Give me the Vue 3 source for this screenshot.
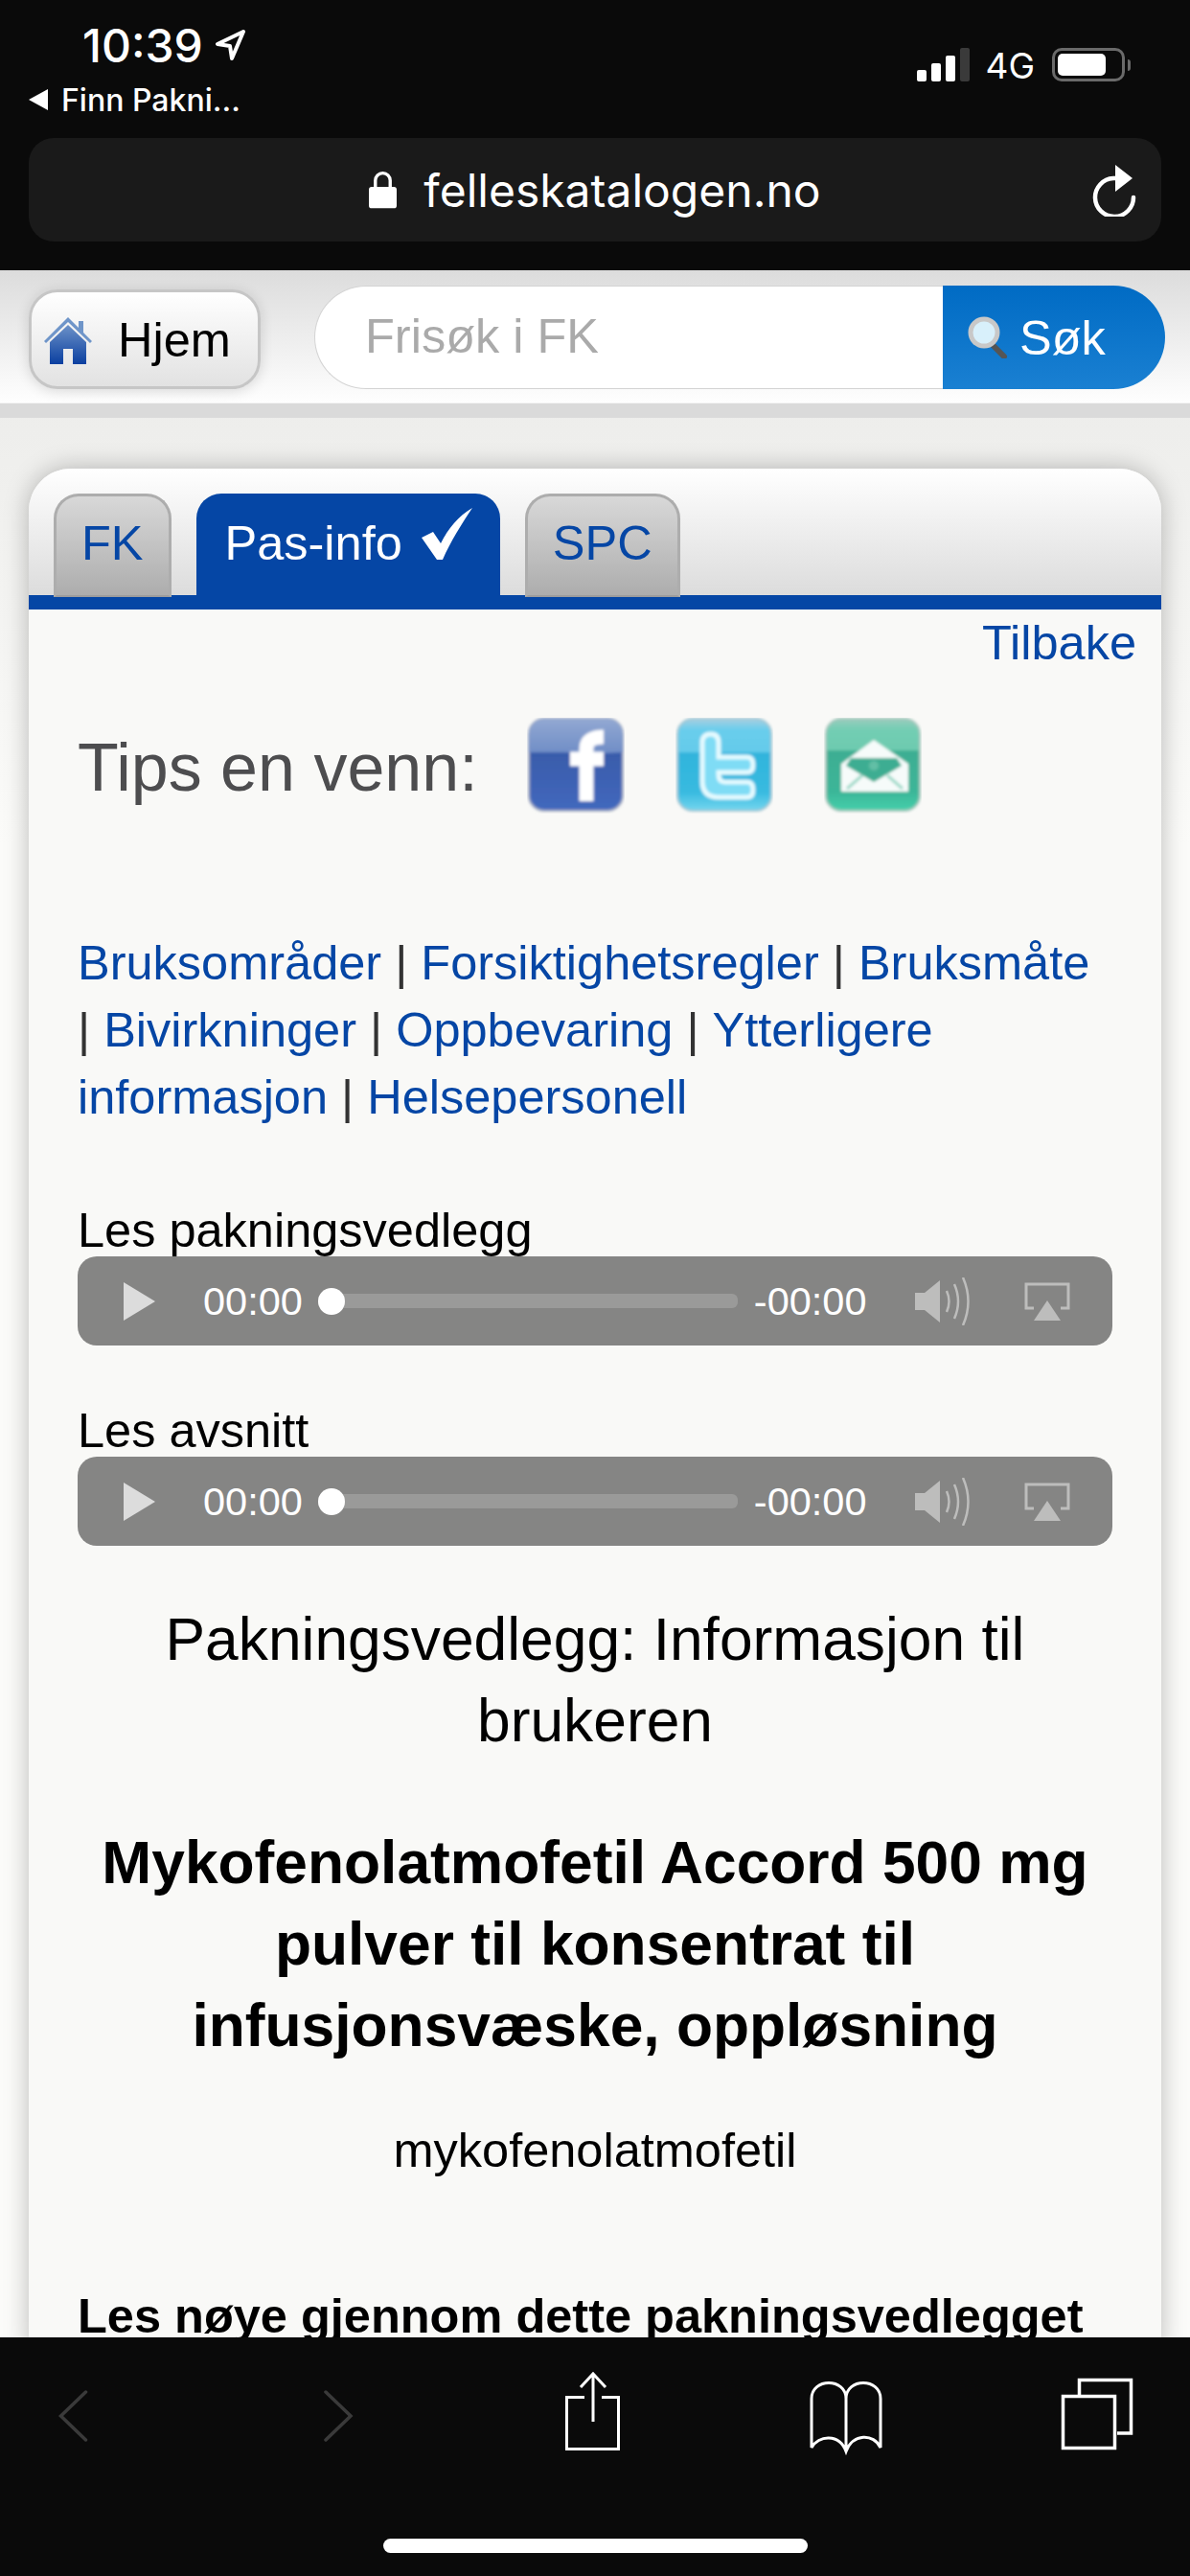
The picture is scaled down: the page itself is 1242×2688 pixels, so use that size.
<script setup>
const navLinks = [
  { text: 'Bruksområder', sep: true },
  { text: 'Forsiktighetsregler', sep: true },
  { text: 'Bruksmåte', sep: true },
  { text: 'Bivirkninger', sep: true },
  { text: 'Oppbevaring', sep: true },
  { text: 'Ytterligere', sep: false },
  { text: 'informasjon', sep: true },
  { text: 'Helsepersonell', sep: false },
]
const players = ['Les pakningsvedlegg', 'Les avsnitt']
</script>

<template>
  <div class="phone">
    <header class="chrome">
      <div class="status">
        <div class="status-left">
          <div class="time">
            10:39
            <svg class="loc" viewBox="0 0 32 32"><path d="M30 2 3 15l13 2 2 13z" fill="none" stroke="#fff" stroke-width="4" stroke-linejoin="round"/></svg>
          </div>
          <div class="back-app">
            <span class="back-tri"></span>
            Finn Pakni...
          </div>
        </div>
        <div class="status-right">
          <div class="signal">
            <i class="b1"></i><i class="b2"></i><i class="b3"></i><i class="b4"></i>
          </div>
          <span class="net">4G</span>
          <div class="battery"><span></span></div>
          <div class="battery-tip"></div>
        </div>
      </div>
      <div class="urlbar">
        <svg class="lock" viewBox="0 0 30 40"><path d="M7 19V10a8 8 0 0 1 16 0v9" fill="none" stroke="#fff" stroke-width="3.5"/><rect y="17" width="30" height="23" rx="3" fill="#fff"/></svg>
        <span class="url">felleskatalogen.no</span>
        <svg class="reload" viewBox="0 0 46 54"><path d="M27 14H22a20 20 0 1 0 21 20" fill="none" stroke="#fff" stroke-width="4.5" stroke-linecap="round"/><path d="M24 0l18 14-18 14z" fill="#fff"/></svg>
      </div>
    </header>

    <div class="page">
      <div class="topbar">
        <button class="home">
          <svg class="house" viewBox="0 0 52 52">
            <defs>
              <linearGradient id="houseFill" x1="0" y1="0" x2="0" y2="1">
                <stop offset="0" stop-color="#6d92c8"/>
                <stop offset="1" stop-color="#0a3fa0"/>
              </linearGradient>
            </defs>
            <path d="M26 3 1 28l2 2L26 8l23 22 2-2-9-9V7h-5v7z" fill="#6f95c9"/>
            <path d="M26 11 7 29v23h14V36h10v16h14V29z" fill="url(#houseFill)"/>
          </svg>
          Hjem
        </button>
        <div class="search">
          <span class="search-input">Frisøk i FK</span>
          <div class="search-btn">
            <svg class="glass" viewBox="0 0 44 44">
              <path d="M27 31l11 11" stroke="#555" stroke-width="6" stroke-linecap="round"/>
              <circle cx="17" cy="17" r="14" fill="#d8f0fb" stroke="#c8c8c8" stroke-width="5"/>
            </svg>
            Søk
          </div>
        </div>
      </div>
      <div class="strip"></div>

      <main class="content">
        <section class="card">
          <div class="tabs">
            <a class="tab">FK</a>
            <a class="tab active">
              Pas-info
              <svg class="check" viewBox="0 0 56 56"><path d="M2 32l12-6 8 12C30 22 40 10 55 1 45 16 32 36 24 55h-6z" fill="#fff"/></svg>
            </a>
            <a class="tab">SPC</a>
          </div>

          <div class="card-body">
            <div class="back-row"><a class="link">Tilbake</a></div>

            <div class="tips">
              <span class="tips-label">Tips en venn:</span>
              <div class="social">
                <svg viewBox="0 0 102 100" class="soc">
                  <defs>
                    <linearGradient id="fbTop" x1="0" y1="0" x2="0" y2="1"><stop offset="0" stop-color="#92a8d2"/><stop offset="1" stop-color="#6e8cc6"/></linearGradient>
                    <linearGradient id="fbBot" x1="0" y1="0" x2="0" y2="1"><stop offset="0" stop-color="#33549f"/><stop offset="1" stop-color="#4268bd"/></linearGradient>
                    <filter id="soft"><feGaussianBlur stdDeviation="1.4"/></filter>
                  </defs>
                  <g filter="url(#soft)">
                    <rect x="2" y="1" width="98" height="96" rx="16" fill="url(#fbBot)" stroke="#a8b0c4" stroke-width="2"/>
                    <path d="M2 36V17A16 16 0 0 1 18 1h66a16 16 0 0 1 16 16v19L60 38l-20-2z" fill="url(#fbTop)"/>
                    <path d="M62 87V32q0-12 18-12M45 43h35" fill="none" stroke="#fff" stroke-width="15"/>
                  </g>
                </svg>
                <svg viewBox="0 0 102 100" class="soc">
                  <defs>
                    <linearGradient id="twBody" x1="0" y1="0" x2="0" y2="1"><stop offset="0" stop-color="#a8cfe0"/><stop offset=".12" stop-color="#68cdec"/><stop offset=".36" stop-color="#64cbea"/><stop offset=".37" stop-color="#2fb4dc"/><stop offset=".8" stop-color="#38bae0"/><stop offset="1" stop-color="#75d6ee"/></linearGradient>
                  </defs>
                  <g filter="url(#soft)">
                    <rect x="2" y="1" width="98" height="96" rx="16" fill="url(#twBody)" stroke="#a6c8d4" stroke-width="2"/>
                    <path d="M28 24v42q0 17 17 17h30q6 0 6-8t-6-8H52q-7 0-7-8V57h30q6 0 6-8t-6-8H45V26q0-9-8-9t-9 7z" fill="#7fdcf5" stroke="#e6fbff" stroke-width="5"/>
                  </g>
                </svg>
                <svg viewBox="0 0 102 100" class="soc">
                  <defs>
                    <linearGradient id="mlBody" x1="0" y1="0" x2="0" y2="1"><stop offset="0" stop-color="#9accbd"/><stop offset=".12" stop-color="#72cdb3"/><stop offset=".34" stop-color="#6dcbaf"/><stop offset=".35" stop-color="#3dad92"/><stop offset=".8" stop-color="#3bb698"/><stop offset="1" stop-color="#46d0ab"/></linearGradient>
                  </defs>
                  <g filter="url(#soft)">
                    <rect x="2" y="1" width="98" height="96" rx="16" fill="url(#mlBody)" stroke="#a8c8be" stroke-width="2"/>
                    <path d="M18 48 52 23l36 25v29H18z" fill="#f6fbfa"/>
                    <path d="M28 42h48l5 8-29 17-29-17z" fill="#3dad92"/>
                    <circle cx="52" cy="50" r="5" fill="#62bfa6"/>
                    <path d="M24 74l16-14M82 74 66 60" stroke="#9dd9c8" stroke-width="3"/>
                  </g>
                </svg>
              </div>
            </div>

            <p class="nav-links">
              <template v-for="l in navLinks" :key="l.text">
                <a class="link">{{ l.text }}</a>{{ ' ' }}<span v-if="l.sep">|&nbsp;</span>
              </template>
            </p>

            <div v-for="(p, i) in players" :key="p" class="audio-block" :class="{ first: i === 0 }">
              <div class="audio-label">{{ p }}</div>
              <div class="audio">
                <span class="play"></span>
                <span class="atime">00:00</span>
                <div class="track"><span class="thumb"></span></div>
                <span class="atime">-00:00</span>
                <svg class="speaker" viewBox="0 0 60 50">
                  <path d="M0 16h10L26 3v44L10 34H0z" fill="#bdbdbc"/>
                  <path d="M33 14q5 11 0 22M41 7q8 18 0 36M50 0q11 25 0 50" fill="none" stroke="#bdbdbc" stroke-width="2.5"/>
                </svg>
                <svg class="airplay" viewBox="0 0 48 40">
                  <path d="M10 27H2V2h44v25h-8" fill="none" stroke="#bdbdbc" stroke-width="3"/>
                  <path d="M24 19l14 21H10z" fill="#bdbdbc"/>
                </svg>
              </div>
            </div>

            <h2 class="doc-title">Pakningsvedlegg: Informasjon til brukeren</h2>
            <h1 class="doc-name">Mykofenolatmofetil Accord 500 mg pulver til konsentrat til infusjonsvæske, oppløsning</h1>
            <p class="doc-sub">mykofenolatmofetil</p>
            <p class="doc-lead">Les nøye gjennom dette pakningsvedlegget</p>
          </div>
        </section>
      </main>
    </div>

    <footer class="toolbar">
      <div class="tools">
        <svg class="tool" viewBox="0 0 74 84"><path d="M47.5 21 21.5 46l26 25" fill="none" stroke="#3a3a3a" stroke-width="3.5" stroke-linecap="round"/></svg>
        <svg class="tool" viewBox="0 0 74 84"><path d="M31 21 57 46 31 71" fill="none" stroke="#3a3a3a" stroke-width="3.5" stroke-linecap="round"/></svg>
        <svg class="tool" viewBox="0 0 74 84">
          <path d="M35 26.5H16.5v54h54v-54H53" fill="none" stroke="#fff" stroke-width="3"/>
          <path d="M44 52V3M31 16 44 2l13 14" fill="none" stroke="#fff" stroke-width="3"/>
        </svg>
        <svg class="tool" viewBox="0 0 74 84">
          <path d="M41 28C41 6 5 6 5 28V79C12 66 34 64 41 83 48 64 70 64 77 79V28C77 6 41 6 41 28V83" fill="none" stroke="#fff" stroke-width="3"/>
        </svg>
        <svg class="tool" viewBox="0 0 74 84">
          <rect x="1.5" y="25.5" width="54" height="54" fill="none" stroke="#fff" stroke-width="3.5"/>
          <path d="M18.5 25V8.5h54V64H58" fill="none" stroke="#fff" stroke-width="3.5"/>
        </svg>
      </div>
      <div class="home-indicator"></div>
    </footer>
  </div>
</template>

<style scoped>
.phone {
  width: 1242px;
  height: 2688px;
  display: flex;
  flex-direction: column;
  overflow: hidden;
  font-family: "Liberation Sans", Arial, sans-serif;
  background: #0a0a0a;
}

.chrome {
  height: 282px;
  flex: none;
  background: #0a0a0a;
  color: #fff;
  font-family: Inter, "Liberation Sans", sans-serif;
  padding: 20px 30px 0;
  box-sizing: border-box;
}

.status {
  height: 124px;
  display: flex;
  justify-content: space-between;
}

.time {
  display: flex;
  align-items: center;
  gap: 12px;
  margin-left: 56px;
  font-size: 48px;
  font-weight: 500;
  height: 54px;
}

.loc {
  width: 32px;
  height: 32px;
}

.back-app {
  display: flex;
  align-items: center;
  gap: 14px;
  font-size: 32px;
  font-weight: 500;
  margin-top: 12px;
  height: 36px;
}

.back-tri {
  width: 0;
  height: 0;
  border-style: solid;
  border-width: 11px 20px 11px 0;
  border-color: transparent #fff transparent transparent;
}

.status-right {
  display: flex;
  align-items: flex-start;
  padding-top: 30px;
  margin-right: 32px;
}

.signal {
  display: flex;
  align-items: flex-end;
  gap: 5px;
  height: 35px;
}

.signal i {
  display: block;
  width: 10px;
  border-radius: 2px;
  background: #fff;
}

.b1 { height: 12px; }
.b2 { height: 19px; }
.b3 { height: 27px; }
.signal .b4 { height: 35px; background: #3a3a3a; }

.net {
  font-size: 37px;
  line-height: 37px;
  margin-left: 16px;
  margin-right: 18px;
}

.battery {
  width: 76px;
  height: 35px;
  box-sizing: border-box;
  border: 3px solid #6a6a6a;
  border-radius: 10px;
  padding: 3px;
}

.battery span {
  display: block;
  width: 50px;
  height: 23px;
  background: #fff;
  border-radius: 5px;
}

.battery-tip {
  width: 3px;
  height: 12px;
  margin: 12px 0 0 3px;
  background: #6a6a6a;
  border-radius: 0 3px 3px 0;
}

.urlbar {
  height: 108px;
  background: #1a1a1a;
  border-radius: 26px;
  display: flex;
  align-items: center;
  justify-content: center;
  position: relative;
  gap: 28px;
}

.lock {
  width: 29px;
  height: 40px;
}

.url {
  font-size: 48px;
  letter-spacing: 0;
}

.reload {
  position: absolute;
  right: 26px;
  top: 28px;
  width: 46px;
  height: 54px;
}

.page {
  flex: 1;
  min-height: 0;
  display: flex;
  flex-direction: column;
  background: linear-gradient(#e9e9e7, #fbfbf9 600px);
  overflow: hidden;
}

.topbar {
  height: 139px;
  flex: none;
  box-sizing: border-box;
  background: linear-gradient(#dcdcdc, #fefefe);
  padding: 16px 26px 0 30px;
  display: flex;
  align-items: flex-start;
  gap: 56px;
  border-bottom: 1px solid #f4f4f4;
}

.home {
  width: 242px;
  height: 104px;
  margin-top: 4px;
  box-sizing: border-box;
  border: 3px solid #c6c6c6;
  border-radius: 30px;
  background: linear-gradient(#fff, #e2e2e2);
  box-shadow: 0 2px 14px rgba(0, 0, 0, 0.14);
  display: flex;
  align-items: center;
  gap: 26px;
  padding: 0 0 0 12px;
  font: 50.5px "Liberation Sans", Arial, sans-serif;
  color: #000;
}

.house {
  width: 52px;
  height: 52px;
  flex: none;
}

.search {
  flex: 1;
  height: 108px;
  display: flex;
}

.search-input {
  flex: 1;
  background: #fff;
  border: 1px solid #d4d4d4;
  border-right: none;
  border-radius: 54px 0 0 54px;
  font-size: 50.5px;
  color: #aaa;
  line-height: 104px;
  padding-left: 52px;
}

.search-btn {
  width: 232px;
  background: linear-gradient(#006bc4, #1a80d2);
  border-radius: 0 54px 54px 0;
  color: #fff;
  font-size: 50.5px;
  display: flex;
  align-items: center;
  gap: 10px;
  padding-left: 26px;
  box-sizing: border-box;
}

.glass {
  width: 44px;
  height: 44px;
  flex: none;
}

.strip {
  height: 15px;
  flex: none;
  background: #dadada;
}

.content {
  padding: 53px 30px 0;
}

.card {
  border-radius: 44px 44px 0 0;
  background: #f9f9f7;
  box-shadow: 0 0 26px rgba(0, 0, 0, 0.26);
  overflow: hidden;
}

.tabs {
  height: 147px;
  box-sizing: border-box;
  padding: 26px 0 0 26px;
  background: linear-gradient(#fff, #dcdcdc 132px);
  border-bottom: 15px solid #0546a5;
  display: flex;
  align-items: flex-start;
  gap: 26px;
}

.tab {
  height: 108px;
  box-sizing: border-box;
  padding: 21px 26px 0;
  border: 3px solid #adadad;
  border-bottom: 2px solid #9d9d9d;
  border-radius: 26px 26px 0 0;
  background: linear-gradient(#d8d8d8, #adadad);
  color: #0546a5;
  font-size: 50.5px;
  line-height: 56px;
}

.tab.active {
  height: 121px;
  border: none;
  background: #0546a5;
  color: #fff;
  padding: 24px 28px 0 30px;
  display: flex;
  align-items: flex-start;
  gap: 18px;
}

.check {
  width: 56px;
  height: 56px;
  margin-top: -10px;
  flex: none;
}

.card-body {
  padding: 0 51px;
}

.link {
  color: #0546a5;
}

.back-row {
  margin-right: -25px;
  text-align: right;
  font-size: 50.5px;
  line-height: 70px;
}

.tips {
  margin-top: 43px;
  display: flex;
  align-items: center;
  gap: 51px;
  height: 100px;
}

.tips-label {
  font-size: 70px;
  padding-top: 4px;
  color: #4d4d4f;
}

.social {
  display: flex;
  gap: 53px;
}

.soc {
  width: 102px;
  height: 100px;
}

.nav-links {
  margin: 121px 0 0;
  font-size: 50.5px;
  line-height: 70px;
  color: #333;
}

.audio-block {
  margin-top: 61px;
}

.audio-block.first {
  margin-top: 76px;
}

.audio-label {
  font-size: 50.5px;
  line-height: 55px;
  color: #000;
}

.audio {
  height: 93px;
  background: #858584;
  border-radius: 20px;
  display: flex;
  align-items: center;
  padding: 0 48px;
  box-sizing: border-box;
  color: #fff;
}

.play {
  width: 0;
  height: 0;
  border-style: solid;
  border-width: 20px 0 20px 33px;
  border-color: transparent transparent transparent #dcdcdc;
  margin-right: 50px;
  flex: none;
}

.atime {
  font-size: 41.5px;
  flex: none;
}

.track {
  width: 438px;
  height: 15px;
  margin: 0 17px 0 16px;
  background: #9a9a99;
  border-radius: 6px;
  position: relative;
  flex: none;
}

.thumb {
  position: absolute;
  left: 0;
  top: -6.5px;
  width: 28px;
  height: 28px;
  border-radius: 50%;
  background: #fff;
}

.speaker {
  width: 60px;
  height: 50px;
  margin-left: 50px;
  flex: none;
}

.airplay {
  width: 48px;
  height: 40px;
  margin-left: 54px;
  flex: none;
}

.doc-title {
  margin: 55px 0 0;
  font-size: 62.3px;
  line-height: 85px;
  font-weight: 400;
  text-align: center;
  color: #000;
}

.doc-name {
  margin: 63px 0 0;
  font-size: 62.3px;
  line-height: 85px;
  font-weight: 700;
  text-align: center;
  color: #000;
}

.doc-sub {
  margin: 53px 0 0;
  font-size: 50.5px;
  line-height: 70px;
  text-align: center;
  color: #000;
}

.doc-lead {
  margin: 103px 0 0;
  font-size: 50.5px;
  line-height: 70px;
  font-weight: 700;
  color: #000;
}

.toolbar {
  height: 249px;
  flex: none;
  background: #0a0a0a;
  box-sizing: border-box;
  padding-top: 36px;
  position: relative;
}

.tools {
  display: flex;
  justify-content: space-between;
  padding: 0 60px 0 42px;
}

.tool {
  width: 74px;
  height: 84px;
  overflow: visible;
}

.home-indicator {
  position: absolute;
  left: 400px;
  top: 210px;
  width: 443px;
  height: 15px;
  border-radius: 8px;
  background: #fff;
}
</style>

<style>
body {
  margin: 0;
  background: #0a0a0a;
}
</style>
